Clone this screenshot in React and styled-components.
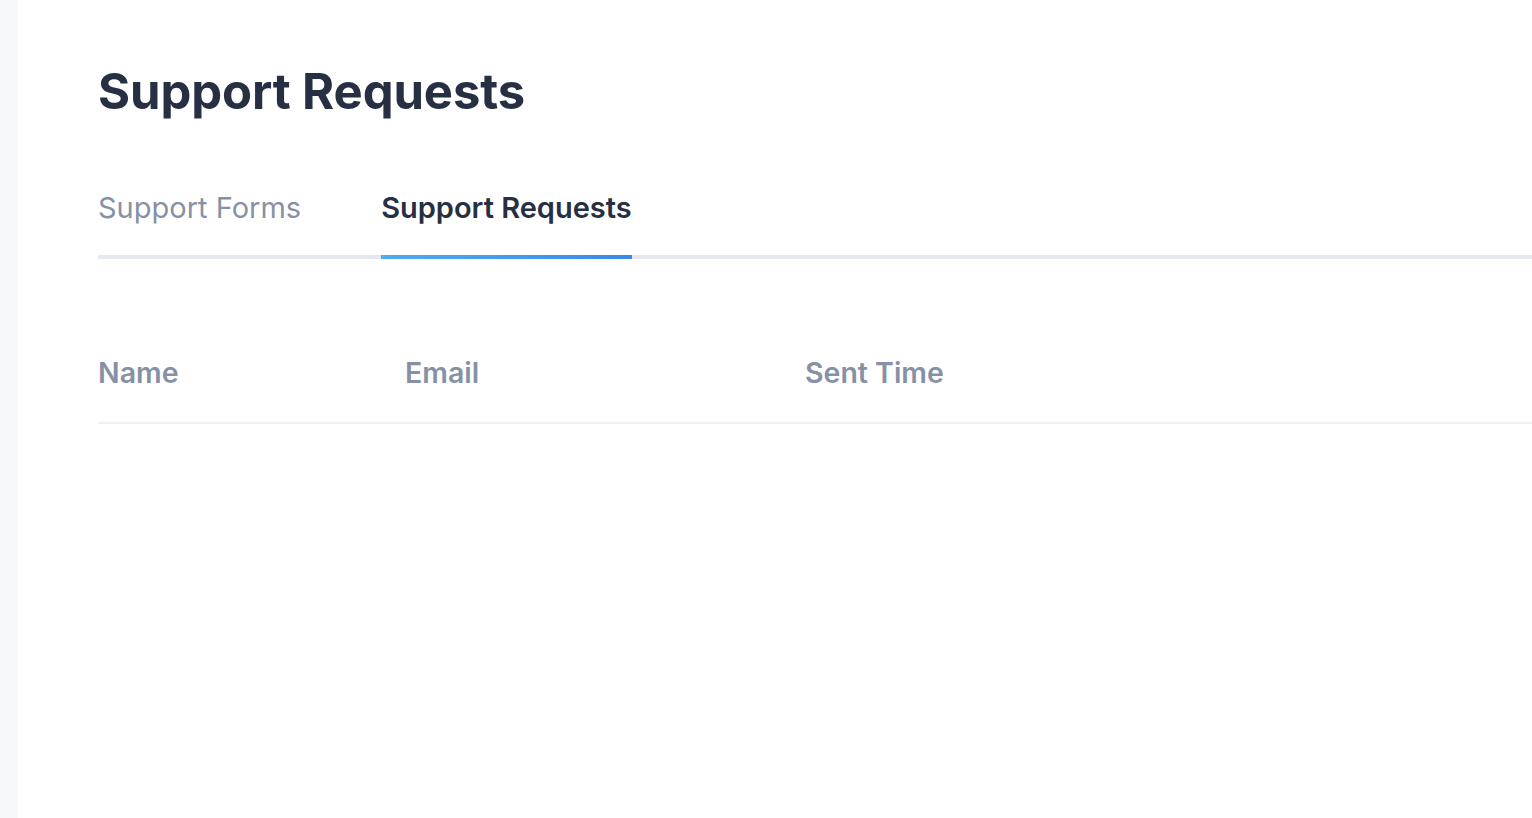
import React from 'react'
import styled, { createGlobalStyle } from 'styled-components'

const GlobalStyle = createGlobalStyle`
  html, body {
    margin: 0;
    padding: 0;
    background: #ffffff;
    font-family: Inter, "Noto Sans", sans-serif;
    overflow: hidden;
  }
`

const Layout = styled.div`
  display: flex;
  min-height: 100vh;
`

const Sidebar = styled.aside`
  width: 18px;
  flex-shrink: 0;
  background-color: #f7f8fa;
`

const Main = styled.main`
  flex: 1;
  padding: 62px 0 0 80px;
`

const Title = styled.h1`
  margin: 0;
  font-size: 49px;
  line-height: 60px;
  font-weight: 700;
  letter-spacing: -0.1px;
  color: #272f42;
`

const Tabs = styled.div`
  display: flex;
  gap: 80px;
  margin-top: 69px;
  border-bottom: 4px solid #e4e7ef;
`

const Tab = styled.div`
  padding-bottom: 30px;
  margin-bottom: -4px;
  font-size: 29px;
  line-height: 34px;
  font-weight: ${p => (p.active ? 600 : 400)};
  color: ${p => (p.active ? '#272f42' : '#8691a6')};
  border-bottom: 4px solid transparent;
  border-image: ${p =>
    p.active ? 'linear-gradient(90deg, #50abf0, #3a89ea) 1' : 'none'};
  cursor: pointer;
`

const Table = styled.div`
  margin-top: 97px;
`

const HeadRow = styled.div`
  display: grid;
  grid-template-columns: 307px 400px 1fr;
  padding-bottom: 32px;
  border-bottom: 2px solid #eef0f4;
`

const HeadCell = styled.div`
  font-size: 28.5px;
  line-height: 34px;
  font-weight: 600;
  color: #8691a6;
`

const App = () => {
  return (
    <Layout>
      <GlobalStyle />
      <Sidebar />
      <Main>
        <Title>Support Requests</Title>
        <Tabs>
          <Tab>Support Forms</Tab>
          <Tab active>Support Requests</Tab>
        </Tabs>
        <Table>
          <HeadRow>
            <HeadCell>Name</HeadCell>
            <HeadCell>Email</HeadCell>
            <HeadCell>Sent Time</HeadCell>
          </HeadRow>
        </Table>
      </Main>
    </Layout>
  )
}

export default App
